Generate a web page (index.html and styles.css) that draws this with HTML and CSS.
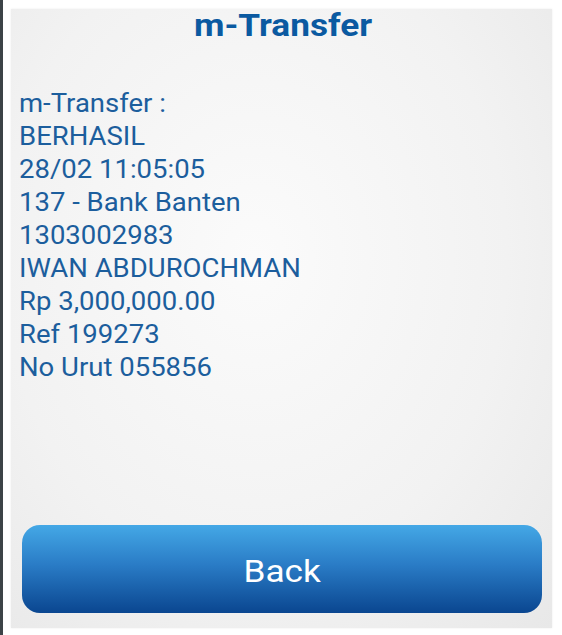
FILE: index.html
```html
<!DOCTYPE html>
<html lang="id">
<head>
    <meta charset="UTF-8">
    <meta name="viewport" content="width=device-width, initial-scale=1.0">
    <title>m-Transfer</title>
    <link rel="stylesheet" href="styles.css">
</head>
<body>
    <div class="edge"></div>
    <div class="panel">
        <h1 class="title">m-Transfer</h1>
        <!-- hasil transfer -->
        <div class="result">
            <div>m-Transfer :</div>
            <div>BERHASIL</div>
            <div>28/02 11:05:05</div>
            <div>137 - Bank Banten</div>
            <div>1303002983</div>
            <div>IWAN ABDUROCHMAN</div>
            <div>Rp 3,000,000.00</div>
            <div>Ref 199273</div>
            <div>No Urut 055856</div>
        </div>
        <button class="back"><span>Back</span></button>
    </div>
</body>
</html>
```

FILE: styles.css
```css
html, body{margin: 0; height: 100%;}
body{background: #fff; font-family: Roboto, "Liberation Sans", sans-serif; display: flex; padding: 9px 10px 7px 0; box-sizing: border-box;}

.edge{width: 3px; margin: -9px 8px -7px 0; background: #3c4347;}

.panel{flex: 1; display: flex; flex-direction: column; background: radial-gradient(ellipse at 45% 40%, #fbfbfb 0%, #f2f2f2 60%, #e8e8e8 100%); box-shadow: 0 0 2px rgba(0,0,0,0.08);}

/* 원본 글자가 가로로 조금 늘어나 있음 */
.title{margin: 0; align-self: center; color: #0b5aa1; font-size: 32px; font-weight: 700; line-height: 32px; transform: scaleX(1.1); padding-left: 2px;}

.result{align-self: flex-start; margin-top: 46px; margin-left: 8px; color: #1c5e9d; font-size: 25px; line-height: 33px; transform: scaleX(1.1); transform-origin: 0 0;}

.back{margin: auto 10px 15px 11px; height: 88px; border: none; border-radius: 18px; color: #fff; font-family: Roboto, "Liberation Sans", sans-serif; font-size: 32px; background: linear-gradient(#44a8e6, #2a7cc6 45%, #0a4690);}
.back span{display: inline-block; transform: scaleX(1.1); padding-top: 4px;}
```
